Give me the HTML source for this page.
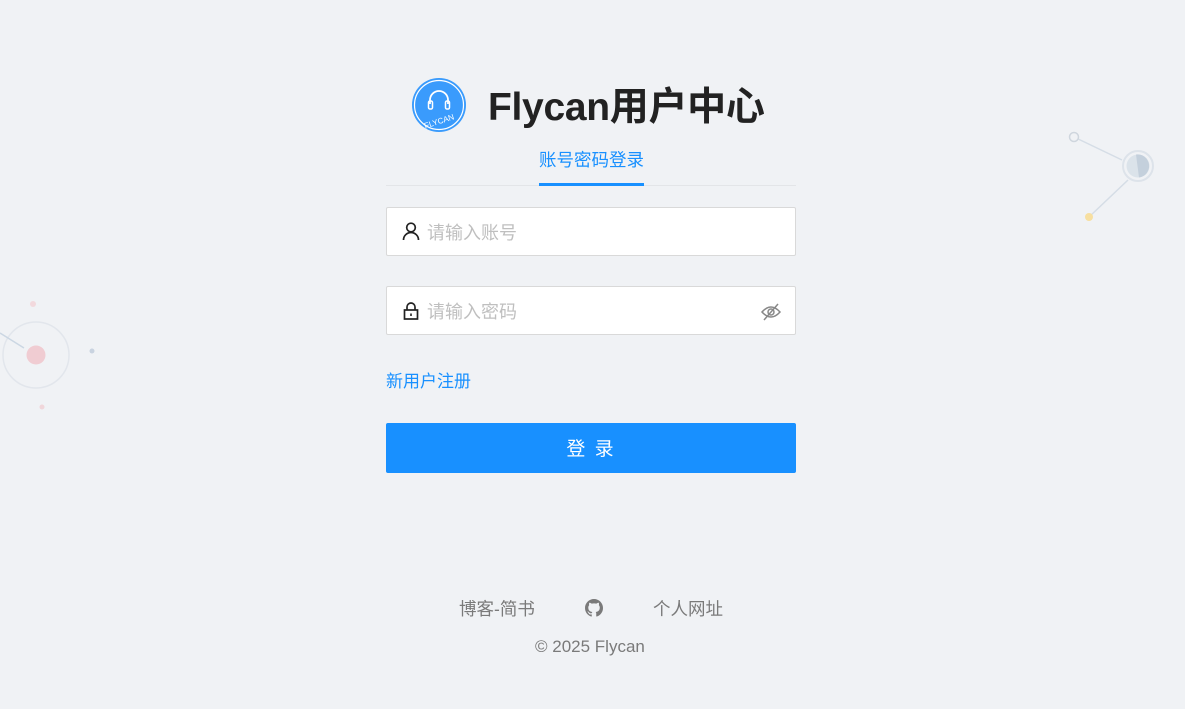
<!DOCTYPE html>
<html><head><meta charset="utf-8"><style>
*{margin:0;padding:0;box-sizing:border-box}
body{width:1185px;height:709px;background:#f0f2f5;font-family:"Liberation Sans","Noto Sans CJK SC",sans-serif;position:relative;overflow:hidden}
.a{position:absolute;white-space:nowrap}
.inp{position:absolute;left:386px;width:410px;height:49px;background:#fff;border:1px solid #d9d9d9;border-radius:2px}
.ph{position:absolute;left:40px;top:13px;font-size:18px;color:#bfbfbf;line-height:24px}
</style></head><body>
<svg class="a" style="left:0;top:0" width="1185" height="709">
<line x1="1074" y1="137" x2="1122" y2="160" stroke="#d5dde6" stroke-width="1.5"/>
<circle cx="1074" cy="137" r="4.5" fill="#f0f2f5" stroke="#cfd6de" stroke-width="1.5"/>
<line x1="1089" y1="217" x2="1128" y2="180" stroke="#d5dde6" stroke-width="1.5"/>
<circle cx="1089" cy="217" r="4" fill="#f7dfa0"/>
<circle cx="1138" cy="166" r="15" fill="#f0f2f5" stroke="#dde3ea" stroke-width="2"/>
<circle cx="1138" cy="166" r="11.5" fill="#dbe3ea"/>
<path d="M1136 154.5 A11.5 11.5 0 0 1 1139 177.5 Z" fill="#c4d0dc"/>
<circle cx="36" cy="355" r="33" fill="none" stroke="#e2e6ec" stroke-width="1.5"/>
<line x1="0" y1="333" x2="24" y2="348" stroke="#cbd7e3" stroke-width="1.5"/>
<circle cx="36" cy="355" r="9.5" fill="#f0ccd2"/>
<circle cx="33" cy="304" r="3" fill="#f2d9dd"/>
<circle cx="92" cy="351" r="2.5" fill="#c9d3e0"/>
<circle cx="42" cy="407" r="2.5" fill="#f0d6da"/>
</svg>
<svg class="a" style="left:411px;top:77px" width="56" height="56" viewBox="0 0 56 56">
<circle cx="28" cy="28" r="27" fill="#3a9bfc"/>
<circle cx="28" cy="28" r="24.5" fill="none" stroke="#fff" stroke-width="1.2"/>
<path d="M19 27 v-4 a9 9 0 0 1 18 0 v4" fill="none" stroke="#fff" stroke-width="1.8"/>
<rect x="17.5" y="24" width="4" height="8" rx="1.5" fill="none" stroke="#fff" stroke-width="1.5"/>
<rect x="34.5" y="24" width="4" height="8" rx="1.5" fill="none" stroke="#fff" stroke-width="1.5"/>
<text x="28" y="47" font-size="8" fill="#fff" text-anchor="middle" font-family="Liberation Sans" transform="rotate(-18 28 44)">FLYCAN</text>
</svg>
<div class="a" style="left:488px;top:83px;font-size:39px;font-weight:bold;color:#222;line-height:50px;letter-spacing:-0.3px">Flycan用户中心</div>
<div class="a" style="left:539px;top:149px;font-size:17.5px;color:#1890ff;line-height:22px">账号密码登录</div>
<div class="a" style="left:386px;top:185px;width:410px;height:1px;background:#e3e5e8"></div>
<div class="a" style="left:539px;top:183px;width:105px;height:3px;background:#1890ff"></div>
<div class="inp" style="top:207px">
<svg class="a" style="left:14px;top:13px" width="20" height="20" viewBox="0 0 20 20"><circle cx="10" cy="6.5" r="4.3" fill="none" stroke="#222" stroke-width="1.7"/><path d="M2.5 19 a7.5 7.5 0 0 1 15 0" fill="none" stroke="#222" stroke-width="1.7"/></svg>
<div class="ph">请输入账号</div></div>
<div class="inp" style="top:286px">
<svg class="a" style="left:14px;top:14px" width="20" height="20" viewBox="0 0 20 20"><path d="M6 9 V6 a4 4 0 0 1 8 0 V9" fill="none" stroke="#222" stroke-width="1.7"/><rect x="3.5" y="9" width="13" height="9" fill="none" stroke="#222" stroke-width="1.7"/><rect x="9.2" y="12.5" width="1.6" height="2.5" fill="#222"/></svg>
<div class="ph">请输入密码</div>
<svg class="a" style="left:373px;top:15px" width="22" height="20" viewBox="0 0 22 20"><path d="M2 10 q9 -10 18 0 q-9 10 -18 0z" fill="none" stroke="#888" stroke-width="1.5"/><circle cx="11" cy="10" r="3" fill="none" stroke="#888" stroke-width="1.5"/><line x1="4" y1="18" x2="18" y2="2" stroke="#888" stroke-width="1.5"/></svg>
</div>
<div class="a" style="left:386px;top:371px;font-size:17px;color:#1890ff;line-height:22px">新用户注册</div>
<div class="a" style="left:386px;top:423px;width:410px;height:50px;background:#1890ff;border-radius:2px;color:#fff;font-size:19px;text-align:center;line-height:54px;letter-spacing:2px">登 录</div>
<div class="a" style="left:459px;top:597px;font-size:17.5px;color:#7a7a7a;line-height:24px">博客-简书</div>
<svg class="a" style="left:585px;top:599px" width="18" height="18" viewBox="0 0 16 16"><path fill="#7a7a7a" d="M8 0C3.58 0 0 3.58 0 8c0 3.54 2.290 6.53 5.47 7.59.4.07.55-.17.55-.38 0-.19-.01-.82-.01-1.490-2.01.37-2.53-.49-2.69-.94-.09-.23-.48-.94-.82-1.13-.28-.15-.68-.52-.01-.53.63-.01 1.08.58 1.23.82.72 1.21 1.87.87 2.33.66.07-.52.28-.87.51-1.07-1.78-.2-3.64-.89-3.64-3.95 0-.87.31-1.59.82-2.15-.08-.2-.36-1.020.08-2.12 0 0 .67-.21 2.2.82.64-.18 1.32-.27 2-.27.68 0 1.36.09 2 .27 1.53-1.04 2.2-.82 2.2-.82.44 1.1.16 1.92.08 2.12.51.56.82 1.27.82 2.15 0 3.07-1.87 3.75-3.65 3.95.29.25.54.73.54 1.48 0 1.07-.01 1.93-.01 2.2 0 .21.15.46.55.38A8.013 8.013 0 0016 8c0-4.42-3.58-8-8-8z"/></svg>
<div class="a" style="left:653px;top:597px;font-size:17.5px;color:#7a7a7a;line-height:24px">个人网址</div>
<div class="a" style="left:535px;top:636px;font-size:17px;color:#7a7a7a;line-height:22px">© 2025 Flycan</div>
</body></html>
